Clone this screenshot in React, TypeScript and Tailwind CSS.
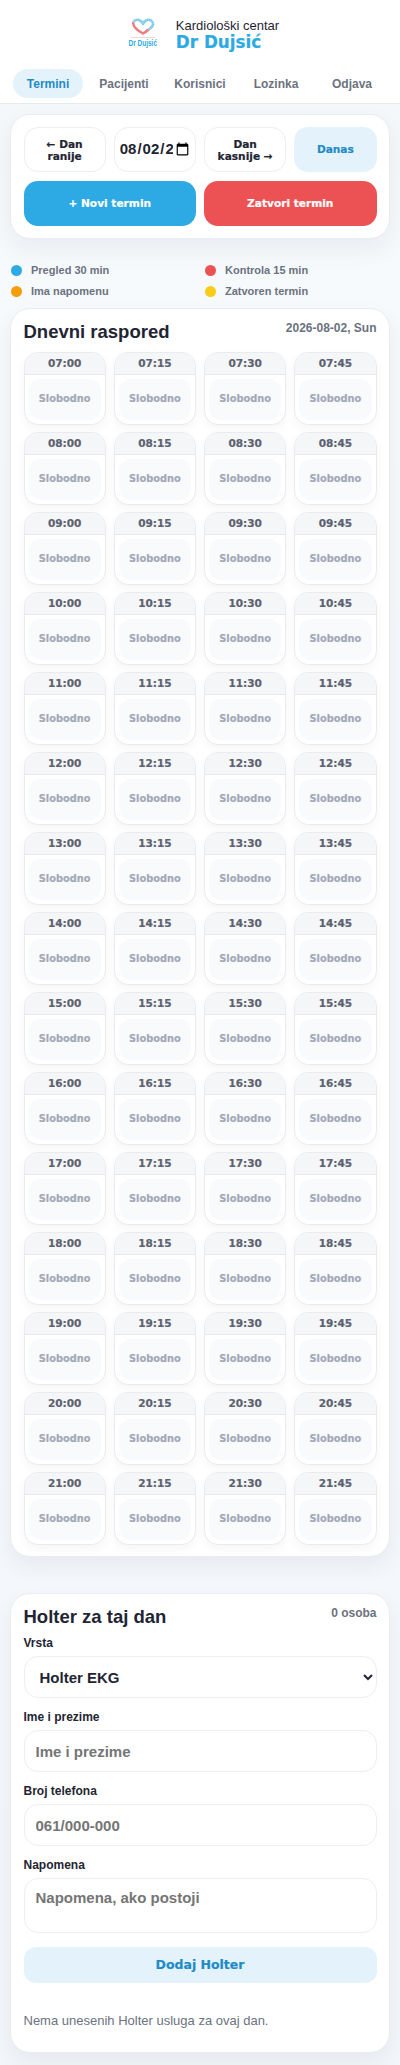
const hours = [7, 8, 9, 10, 11, 12, 13, 14, 15, 16, 17, 18, 19, 20, 21];
const minutes = ["00", "15", "30", "45"];
const navItems = ["Pacijenti", "Korisnici", "Lozinka", "Odjava"];

const heavy = "font-['DejaVu_Sans',sans-serif] font-bold [-webkit-text-stroke:0.2px]";
const control = "w-full rounded-[14px] border border-[#eceef1] bg-white text-[15px] font-semibold text-[#1f2533] placeholder:text-[#757575]";
const card = "rounded-[20px] border border-[#e9ecf0] bg-white shadow-[0_10px_25px_rgba(15,23,42,0.06)]";

function Logo() {
  return (
    <div className="flex w-[24px] flex-col items-center">
      <svg width="24" height="17" viewBox="0 0 24 17" fill="none">
        <path d="M2.500 4 C1 8 6 12 12 15.500 C14 14.500 16 13 17.500 11.500" stroke="#ee7c80" strokeWidth="2.500" />
        <path d="M2.500 4 C4.500 0.500 9 1 12 5.500 C15 1 19.500 0.500 21.500 4 C23 7 20 10 17.500 11.500" stroke="#6cc4ea" strokeWidth="2.500" />
        <path d="M2.500 4 C4.500 0.500 9 1 12 5.500 C15 1 19.500 0.500 21.500 4 C23 7 20 10 17.500 11.500" stroke="#ffffff" strokeOpacity="0.4" strokeWidth="2.500" strokeDasharray="1 1" />
      </svg>
      <div className="mt-[2px] h-px w-[24px] bg-[#f6d5d6]" />
      <span className="mt-[1px] scale-x-[0.72] whitespace-nowrap text-[9px] font-bold leading-[9px] text-[#2da9e4]">Dr Dujsić</span>
    </div>
  );
}

function Slot({ time }: { time: string }) {
  return (
    <div className="flex h-[73px] flex-col overflow-hidden rounded-[14px] border border-[#e8ebef] bg-white shadow-[0_4px_10px_rgba(15,23,42,0.04)]">
      <div className={`${heavy} h-[22px] border-b border-[#e5e8ec] bg-[#f5f6f8] text-center text-[10.500px] leading-[20px] text-[#5b6270]`}>{time}</div>
      <div className="flex-1 p-[4px]">
        <div className={`${heavy} flex h-full items-center justify-center rounded-[12px] bg-[#f9fafc] text-[9.800px] text-[#a1a8b8]`}>Slobodno</div>
      </div>
    </div>
  );
}

function Field({ label, children }: { label: string; children: React.ReactNode }) {
  return (
    <label className="mb-[12px] block">
      <span className="mb-[5px] block text-[12px] font-semibold leading-[15px] text-[#1f2533]">{label}</span>
      {children}
    </label>
  );
}

function LegendItem({ color, label }: { color: string; label: string }) {
  return (
    <div className="flex items-center gap-[9px]">
      <i className={`h-[11px] w-[11px] rounded-full ${color}`} />
      {label}
    </div>
  );
}

export default function App() {
  return (
    <div className="min-h-[2065px] bg-[linear-gradient(#f3f6f9,#f7fafd_300px,#f3f7fb)] font-['Liberation_Sans',Arial,sans-serif]">
      <header className="h-[104px] border-b border-[#e6e9ed] bg-white">
        <div className="flex justify-center gap-[21px] pl-[10px] pt-[18px]">
          <Logo />
          <div>
            <div className="text-[13px] leading-[15px] text-[#1f2533]">Kardiološki centar</div>
            <div className={`${heavy} text-[16.800px] leading-[18px] text-[#2da9e4]`}>Dr Dujsić</div>
          </div>
        </div>
        <nav className="mt-[18px] grid grid-cols-5 gap-[6px] px-[13px] text-[12px] font-semibold text-[#6b7280]">
          <span className="flex h-[29px] items-center justify-center rounded-full bg-[#e4f3fb] text-[#1f8bc6]">Termini</span>
          {navItems.map((item) => (
            <span key={item} className="flex h-[29px] items-center justify-center">{item}</span>
          ))}
        </nav>
      </header>

      <main className="px-[10px] pt-[10px]">
        <section className={`${card} px-[12.500px] py-[12px]`}>
          <div className="grid grid-cols-4 gap-[8px]">
            <button className={`${heavy} h-[45px] rounded-[14px] border border-[#eceef1] bg-white px-[8px] text-[10.600px] leading-[12px] text-[#1f2533]`}>← Dan ranije</button>
            <input type="date" defaultValue="2026-08-02" className={`${control} h-[45px] pl-[4px] pr-[3px]`} />
            <button className={`${heavy} h-[45px] rounded-[14px] border border-[#eceef1] bg-white px-[8px] text-[10.600px] leading-[12px] text-[#1f2533]`}>Dan kasnije →</button>
            <button className={`${heavy} h-[45px] rounded-[14px] bg-[#e4f3fb] text-[10.600px] text-[#1f8bc6]`}>Danas</button>
          </div>
          <div className="mt-[9px] grid grid-cols-2 gap-[8px]">
            <button className={`${heavy} h-[45px] rounded-[14px] bg-[#2da9e4] text-[10.600px] text-white`}>+ Novi termin</button>
            <button className={`${heavy} h-[45px] rounded-[14px] bg-[#ec5254] text-[10.600px] text-white`}>Zatvori termin</button>
          </div>
        </section>

        <div className="mt-[25px] grid grid-cols-[194px_1fr] gap-y-[9px] pl-[1px] text-[11px] font-semibold leading-[12px] text-[#6b7280]">
          <LegendItem color="bg-[#2da9e4]" label="Pregled 30 min" />
          <LegendItem color="bg-[#ec5254]" label="Kontrola 15 min" />
          <LegendItem color="bg-[#f59e0b]" label="Ima napomenu" />
          <LegendItem color="bg-[#facc15]" label="Zatvoren termin" />
        </div>

        <section className={`${card} mt-[11px] px-[12.500px] pb-[11px] pt-[12px]`}>
          <div className="mb-[10px] flex h-[21px] items-start justify-between">
            <h2 className="text-[18.500px] font-bold leading-[21px] text-[#1f2533]">Dnevni raspored</h2>
            <span className="text-[12px] font-semibold leading-[15px] text-[#6b7280]">2026-08-02, Sun</span>
          </div>
          <div className="grid grid-cols-4 gap-x-[8px] gap-y-[7px]">
            {hours.flatMap((hour) =>
              minutes.map((minute) => {
                const time = `${String(hour).padStart(2, "0")}:${minute}`;
                return <Slot key={time} time={time} />;
              }),
            )}
          </div>
        </section>

        <section className={`${card} mt-[36px] px-[12.500px] pb-[23px] pt-[12px]`}>
          <div className="mb-[9px] flex h-[21px] items-start justify-between">
            <h2 className="text-[18.500px] font-bold leading-[21px] text-[#1f2533]">Holter za taj dan</h2>
            <span className="text-[12px] font-semibold leading-[15px] text-[#6b7280]">0 osoba</span>
          </div>
          <Field label="Vrsta">
            <select className={`${control} h-[42px] px-[11px]`}>
              <option>Holter EKG</option>
            </select>
          </Field>
          <Field label="Ime i prezime">
            <input placeholder="Ime i prezime" className={`${control} h-[42px] px-[11px]`} />
          </Field>
          <Field label="Broj telefona">
            <input placeholder="061/000-000" className={`${control} h-[42px] px-[11px]`} />
          </Field>
          <label className="block">
            <span className="mb-[5px] block text-[12px] font-semibold leading-[15px] text-[#1f2533]">Napomena</span>
            <textarea placeholder="Napomena, ako postoji" className={`${control} block h-[55px] resize-none px-[11px] py-[8px]`} />
          </label>
          <button className={`${heavy} mt-[14px] h-[36px] w-full rounded-[12px] bg-[#e4f3fb] text-[12.500px] text-[#1f8bc6]`}>Dodaj Holter</button>
          <p className="mt-[30px] text-[13px] leading-[16px] text-[#6b7280]">Nema unesenih Holter usluga za ovaj dan.</p>
        </section>
      </main>
    </div>
  );
}
